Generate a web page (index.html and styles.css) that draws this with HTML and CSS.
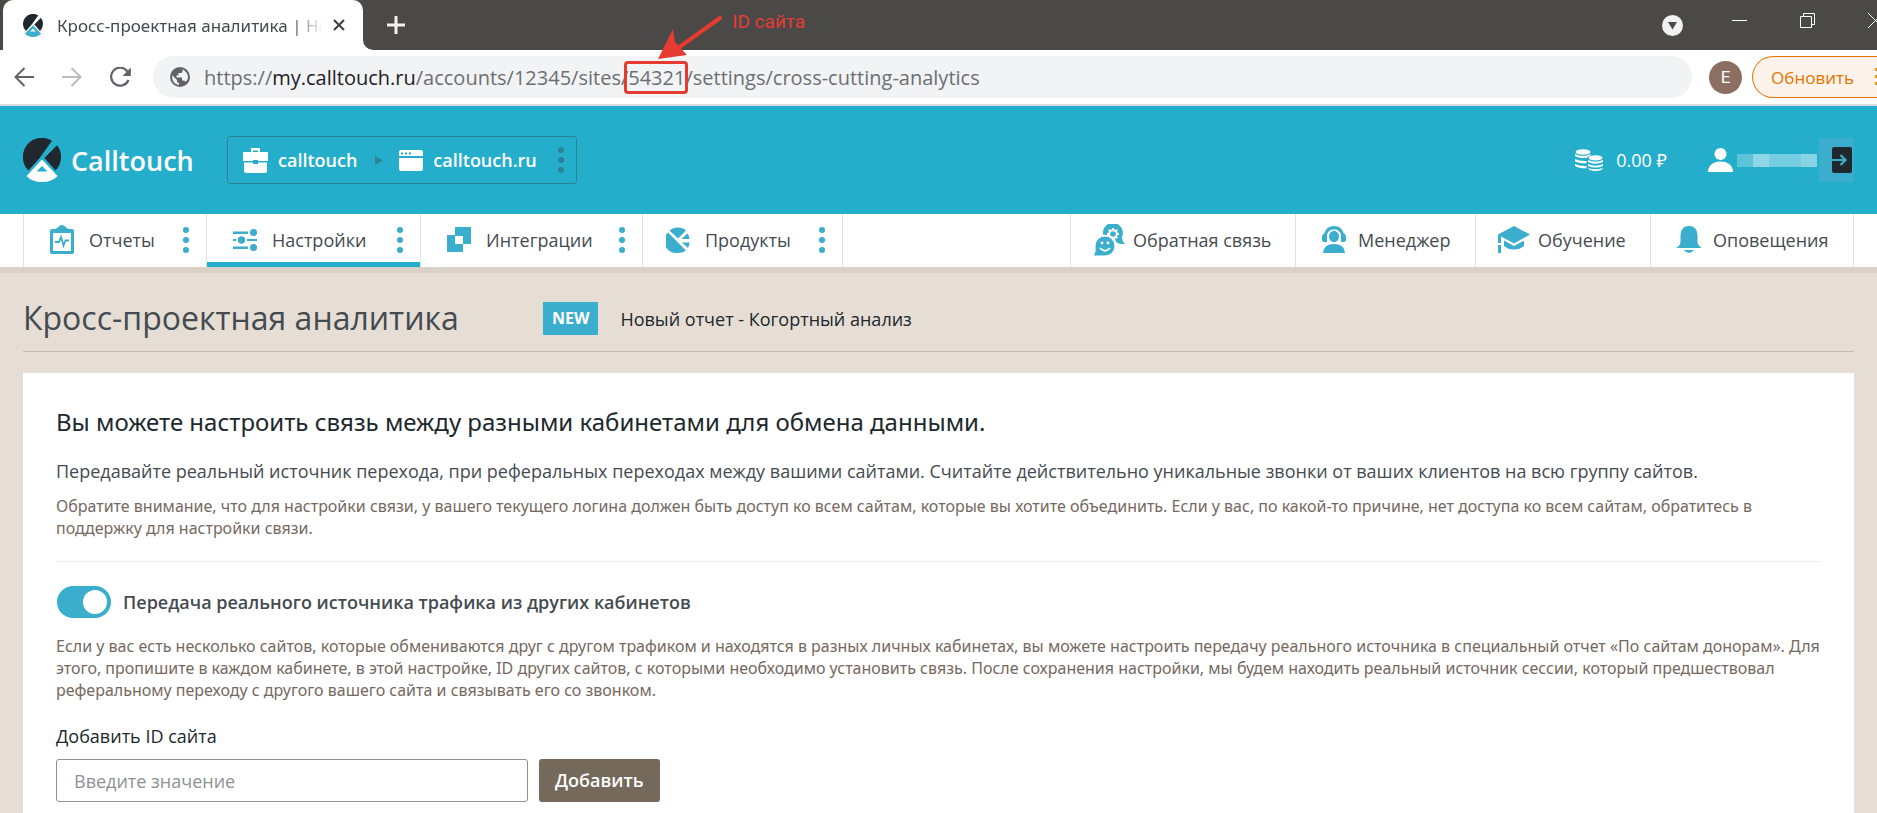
FILE: index.html
```html
<!DOCTYPE html>
<html lang="ru">
<head>
<meta charset="utf-8">
<title>Кросс-проектная аналитика | Настройки</title>
<link rel="stylesheet" href="styles.css">
</head>
<body>
<svg class="defs" aria-hidden="true">
  <defs>
    <symbol id="logo" viewBox="0 0 38 44">
      <path d="M5.500 32.400A19 19 0 0 1 29 2.800L17 19.500Z" fill="#20282d"/>
      <path d="M34 7.300A19 19 0 0 1 32.500 32.400L21.500 20Z" fill="#20282d"/>
      <path fill="currentColor" fill-rule="evenodd" d="M19 21.500L34.500 38Q29 44 19 44T3.500 38ZM19 28L13.500 33.500H24.500Z"/>
    </symbol>
    <symbol id="dots" viewBox="0 0 6 26"><circle cx="3" cy="3" r="3"/><circle cx="3" cy="13" r="3"/><circle cx="3" cy="23" r="3"/></symbol>
  </defs>
</svg>

<div class="browser">
  <div class="tabstrip">
    <div class="tab">
      <svg class="favicon" width="20" height="23"><use href="#logo"/></svg>
      <span class="tab-title">Кросс-проектная аналитика | На</span>
      <button class="plain" aria-label="Закрыть вкладку"><svg width="12" height="12" viewBox="0 0 12 12" fill="none" stroke="#3c4043" stroke-width="2"><path d="M1 1L11 11M11 1L1 11"/></svg></button>
    </div>
    <button class="plain new-tab" aria-label="Новая вкладка"><svg width="18" height="18" viewBox="0 0 18 18" fill="none" stroke="#f1f1f1" stroke-width="3"><path d="M9 0V18M0 9H18"/></svg></button>
    <div class="window-buttons">
      <button class="plain" aria-label="Поиск вкладок"><svg width="21" height="21" viewBox="0 0 21 21"><circle cx="10.500" cy="10.500" r="10.500" fill="#f1f1f1"/><path d="M6 7H15L10.500 14.500Z" fill="#4a4947"/></svg></button>
      <button class="plain lift" aria-label="Свернуть"><svg width="15" height="15" viewBox="0 0 15 15"><path d="M0 7.500H15" stroke="#fff"/></svg></button>
      <button class="plain lift" aria-label="Развернуть"><svg width="15" height="15" viewBox="0 0 15 15" fill="none" stroke="#fff"><path d="M.5 3.500H11.500V14.500H.5ZM3.500 3V.5H14.500V11.500H12"/></svg></button>
      <button class="plain lift" aria-label="Закрыть"><svg width="15" height="15" viewBox="0 0 15 15" stroke="#fff"><path d="M0 0L15 15M15 0L0 15"/></svg></button>
    </div>
  </div>

  <div class="toolbar">
    <div class="history">
      <button class="plain" aria-label="Назад"><svg width="20" height="20" viewBox="0 0 20 20" fill="none" stroke="#5f6368" stroke-width="2"><path d="M20 10H2M10.500 1L1.500 10L10.500 19"/></svg></button>
      <button class="plain" aria-label="Вперёд"><svg width="20" height="20" viewBox="0 0 20 20" fill="none" stroke="#bdbdbf" stroke-width="2"><path d="M0 10H18M9.500 1L18.500 10L9.500 19"/></svg></button>
      <button class="plain" aria-label="Обновить страницу"><svg width="21" height="21" viewBox="0 0 21 21"><path d="M17.500 4.500A9 9 0 1 0 18.500 13" fill="none" stroke="#5f6368" stroke-width="2.200"/><path d="M20.800 .5V9H12.500Z" fill="#5f6368"/></svg></button>
    </div>
    <div class="address">
      <svg width="20" height="20" viewBox="0 0 20 20"><circle cx="10" cy="10" r="10" fill="#5f6368"/><path fill="#f1f3f4" d="M12.500 2.400V4.500C12.500 5.500 11.500 6 10.500 6H8.500V8L6.500 8.500V10.500H12V13.500H13.500C14.500 13.500 15.300 14.200 15.600 15C17 13.500 18 12 18 10C18 6.500 15.500 3.500 12.500 2.400ZM2.200 8.200L7 13V14C7 15 8 15.800 9 16V18C4.500 17.300 1.500 13 2.200 8.200Z"/></svg>
      <div class="url">https://<span class="host">my.calltouch.ru</span>/accounts/12345/sites/<span class="site-id">54321<span class="marker"></span><svg class="arrow" width="66" height="46" viewBox="0 0 66 46"><path d="M62 3L20 33" stroke="#e63b30" stroke-width="4" stroke-linecap="round"/><path d="M0 44L15 14L17 27L29 40Z" fill="#e63b30"/></svg><span class="note">ID сайта</span></span>/settings/cross-cutting-analytics</div>
    </div>
    <span class="avatar">E</span>
    <button class="update"><span>Обновить</span><svg width="4" height="18" viewBox="0 0 4 18" fill="#f29900"><path d="M0 0H4V3H0ZM0 7H4V10H0ZM0 14H4V17H0Z"/></svg></button>
  </div>
</div>

<header class="header">
  <a class="brand" href="#"><svg width="38" height="44"><use href="#logo"/></svg><span>Calltouch</span></a>
  <div class="crumbs">
    <svg width="25" height="25" viewBox="0 0 25 25"><path fill="#fff" fill-rule="evenodd" d="M8 0H17V4H24Q25 4 25 5V13H15V12H10V13H0V5Q0 4 1 4H8ZM10 2.500V4H15V2.500ZM1 14.500H10V16H15V14.500H24V23Q24 25 22 25H3Q1 25 1 23Z"/></svg>
    <a href="#">calltouch</a>
    <svg class="crumb-arrow" width="8" height="9" viewBox="0 0 8 9"><path d="M0 0L8 4.500L0 9Z" fill="#2d8394"/></svg>
    <svg width="24" height="21" viewBox="0 0 24 21"><path fill="#fff" d="M2 0H22Q24 0 24 2V6H0V2Q0 0 2 0ZM0 8H24V19Q24 21 22 21H2Q0 21 0 19Z"/><path fill="#25aecb" d="M2 2.500H4V4.500H2ZM6 2.500H8V4.500H6ZM10 2.500H12V4.500H10Z"/></svg>
    <a href="#">calltouch.ru</a>
    <button class="plain crumb-menu" aria-label="Меню сайта"><svg width="6" height="26"><use href="#dots"/></svg></button>
  </div>
  <div class="account">
    <svg width="28" height="22" viewBox="0 0 28 22"><g fill="#fff"><ellipse cx="8" cy="3" rx="7.500" ry="2.800"/><path d="M0 5Q8 9 15.500 5V6.500Q12 7.500 12 9Q4 9.500 0 7ZM0 10Q5 12.500 11.500 12V14.300Q4 14.500 0 12.500ZM0 15Q5 17.300 11.500 16.800V19.300Q4 19.500 0 17Z"/><ellipse cx="20.500" cy="8.800" rx="7" ry="2.600"/><path d="M13 11Q20.500 14.500 28 11V13Q20.500 16.500 13 13ZM13 15Q20.500 18.500 28 15V17Q20.500 20 13 17ZM13 19Q20.500 21.500 28 19Q27 22 20.500 22T13 19Z"/></g></svg>
    <span class="balance">0.00 ₽</span>
    <svg width="25" height="24" viewBox="0 0 25 24" fill="#fff"><circle cx="12.500" cy="6" r="6"/><path d="M0 24V22Q2 13.500 12.500 13.500T25 22V24Z"/></svg>
    <span class="masked"><i></i><i></i><i></i><i></i><i></i></span>
    <button class="plain exit" aria-label="Выйти"><svg width="20" height="26" viewBox="0 0 20 26"><rect width="20" height="26" rx="2" fill="#20282d"/><path d="M0 13H13M8.500 8L13.500 13L8.500 18" fill="none" stroke="#3caecd" stroke-width="2.200"/></svg></button>
  </div>
</header>

<nav class="nav">
  <div class="item w-reports">
    <svg width="24" height="29" viewBox="0 0 24 29"><path fill="#3caecd" fill-rule="evenodd" d="M2 4H6V8H18V4H22Q24 4 24 6V27Q24 29 22 29H2Q0 29 0 27V6Q0 4 2 4ZM3 8V26H21V8Z"/><path fill="#3caecd" d="M6 8V4Q6 2.500 8 2.500Q9 0 12 0T16 2.500Q18 2.500 18 4V8Z"/><path fill="none" stroke="#3caecd" stroke-width="1.800" d="M5 17H9L11 12L13.500 20.500L15.500 15.500H19"/></svg>
    <a href="#">Отчеты</a>
    <button class="plain more" aria-label="Меню отчетов"><svg width="6" height="26"><use href="#dots"/></svg></button>
  </div>
  <div class="item active w-settings">
    <svg width="24" height="22" viewBox="0 0 24 22"><g fill="#3caecd"><path d="M0 2.500H15V5H0ZM0 10H3V12H0ZM14 10H24V12H14ZM0 17.500H15V20H0Z"/><circle cx="20.500" cy="3.500" r="3.500"/><circle cx="8.500" cy="11" r="3.700"/><circle cx="20.500" cy="18.500" r="3.500"/></g></svg>
    <a href="#" aria-current="page">Настройки</a>
    <button class="plain more" aria-label="Меню настроек"><svg width="6" height="26"><use href="#dots"/></svg></button>
  </div>
  <div class="item w-integrations">
    <svg width="24" height="25" viewBox="0 0 24 25"><path fill="#3caecd" fill-rule="evenodd" d="M8 0H24V17H16V25H0V8H8ZM8 9V17H16V9Z"/></svg>
    <a href="#">Интеграции</a>
    <button class="plain more" aria-label="Меню интеграций"><svg width="6" height="26"><use href="#dots"/></svg></button>
  </div>
  <div class="item w-products">
    <svg width="24" height="26" viewBox="0 0 24 26"><g fill="#3caecd"><path d="M3.500 3.500Q7 .5 12 .5T20 3.500L12 11.500Z"/><path d="M2 5.500L20 23.500Q17 26 12 26A12 12 0 0 1 2 5.500Z"/><path d="M16 11.500L21.500 6.500Q23.500 9 23.500 12H16ZM16 15.500H23.500Q23.500 18.500 22 21Z"/></g></svg>
    <a href="#">Продукты</a>
    <button class="plain more" aria-label="Меню продуктов"><svg width="6" height="26"><use href="#dots"/></svg></button>
  </div>
  <div class="links">
    <a class="link w-feedback" href="#"><svg width="32" height="32" viewBox="0 0 32 32"><path fill="#3caecd" d="M10 10.500A10 10 0 1 1 29 13Q28.500 17 32 20Q27 20.500 23.500 18.500Q22 11 10 10.500Z"/><circle cx="20" cy="10" r="3.800" fill="none" stroke="#fff" stroke-width="2"/><path stroke="#fff" stroke-width="2" d="M20 4V6M20 14V16M14 10H16M24 10H26M15.800 5.800L17 7M24.200 5.800L23 7M24.200 14.200L23 13"/><path fill="#3caecd" stroke="#fff" stroke-width="1" d="M2 22A10 10 0 1 1 12 32H0Q3 29 2 22Z"/><circle cx="9" cy="19" r="1.400" fill="#fff"/><circle cx="15" cy="19" r="1.400" fill="#fff"/><path d="M7 24Q12 29.500 17 24" fill="none" stroke="#fff" stroke-width="1.800"/></svg>Обратная связь</a>
    <a class="link w-manager" href="#"><svg width="32" height="27" viewBox="0 0 32 27"><g fill="#3caecd"><ellipse cx="16" cy="10.500" rx="5" ry="5.700"/><path d="M6.500 7Q8.500 0 16 0T25.500 7Q28 8 28 11V14Q28 16 25.500 16H23V9Q22 3.500 16 3.500T9 9V16H6.500Q4 16 4 14V11Q4 8 6.500 7Z"/><path d="M5 27Q5.500 18 16 18T27 27Z"/></g></svg>Менеджер</a>
    <a class="link w-training" href="#"><svg width="32" height="27" viewBox="0 0 32 27"><g fill="#3caecd"><path d="M16 0L32 8.500L16 17.500L3 10.500V17H0V8.500ZM0 19H3V27H0Z"/><path d="M6 14.500L16 20L26 14.500V20Q22 23.500 16 23.500T6 20Z"/></g></svg>Обучение</a>
    <a class="link w-alerts" href="#"><svg width="32" height="27" viewBox="0 0 32 27"><g fill="#3caecd"><path d="M3 22Q7 20 7.500 16V9Q8 0 16 0T24.500 9V16Q25 20 29 22Z"/><path d="M11 24H21Q19 27 16 27T11 24Z"/></g></svg>Оповещения</a>
  </div>
</nav>

<main class="page">
  <div class="page-head">
    <h1>Кросс-проектная аналитика</h1>
    <span class="badge">NEW</span>
    <a class="promo" href="#">Новый отчет - Когортный анализ</a>
  </div>
  <section class="card">
    <h2>Вы можете настроить связь между разными кабинетами для обмена данными.</h2>
    <p class="lead">Передавайте реальный источник перехода, при реферальных переходах между вашими сайтами. Считайте действительно уникальные звонки от ваших клиентов на всю группу сайтов.</p>
    <p class="hint">Обратите внимание, что для настройки связи, у вашего текущего логина должен быть доступ ко всем сайтам, которые вы хотите объединить. Если у вас, по какой-то причине, нет доступа ко всем сайтам, обратитесь в поддержку для настройки связи.</p>
    <hr>
    <div class="switch-row">
      <input class="switch" type="checkbox" id="transfer" checked>
      <label for="transfer">Передача реального источника трафика из других кабинетов</label>
    </div>
    <p class="hint">Если у вас есть несколько сайтов, которые обмениваются друг с другом трафиком и находятся в разных личных кабинетах, вы можете настроить передачу реального источника в специальный отчет «По сайтам донорам». Для этого, пропишите в каждом кабинете, в этой настройке, ID других сайтов, с которыми необходимо установить связь. После сохранения настройки, мы будем находить реальный источник сессии, который предшествовал реферальному переходу с другого вашего сайта и связывать его со звонком.</p>
    <form class="add">
      <label for="site">Добавить ID сайта</label>
      <div class="add-row">
        <input id="site" type="text" placeholder="Введите значение">
        <button type="button">Добавить</button>
      </div>
    </form>
  </section>
</main>
</body>
</html>
```
FILE: styles.css
```css
* { box-sizing: border-box; }
body {
  margin: 0;
  height: 100vh;
  overflow: hidden;
  display: flex;
  flex-direction: column;
  font-family: "Open Sans", "Noto Sans", sans-serif;
  font-size: 18px;
  font-weight: 500;
  color: #444b50;
  background: #e6ddd4;
}
a { color: inherit; text-decoration: none; }
svg { flex: none; display: block; }
input, button { font: inherit; }
.defs { position: absolute; width: 0; height: 0; }
.plain { border: 0; padding: 0; background: none; display: flex; flex: none; }

/* browser frame */
.browser { flex: none; border-bottom: 2px solid #dadce0; background: #fff; font-weight: 400; }
.tabstrip { display: flex; align-items: center; height: 50px; padding-left: 3px; background: #4a4947; overflow: hidden; }
.tab {
  display: flex;
  align-items: center;
  flex: none;
  width: 360px;
  height: 50px;
  padding: 0 18px 0 20px;
  border-radius: 10px 10px 0 0;
  background: #fff;
  box-shadow: 10px 20px 0 #fff;
  position: relative;
}
.tab::after {
  content: "";
  position: absolute;
  left: 100%;
  bottom: 0;
  width: 10px;
  height: 50px;
  border-bottom-left-radius: 10px;
  background: #4a4947;
}
.favicon { color: #3caecd; }
.tab-title {
  flex: 1;
  margin: 0 10px 0 14px;
  font-family: "Noto Sans", sans-serif;
  font-size: 17px;
  white-space: nowrap;
  color: #45494d;
  width: 0;
  mask-image: linear-gradient(90deg, #000 88%, transparent);
}
.new-tab { margin-left: 24px; }
.window-buttons { display: flex; align-items: center; margin-left: auto; margin-right: -6px; }
.window-buttons button + button { margin-left: 53px; }
.window-buttons button:nth-child(2) { margin-left: 49px; }
.lift { padding-bottom: 9px; }
.toolbar { display: flex; align-items: center; height: 54px; }
.history { display: flex; gap: 28px; padding-left: 14px; width: 153px; }
.address {
  flex: 1;
  display: flex;
  align-items: center;
  gap: 14px;
  height: 42px;
  padding-left: 17px;
  border-radius: 21px;
  background: #f1f3f4;
}
.url { font-size: 20px; white-space: nowrap; color: #6b6f73; }
.host { color: #202124; }
.site-id { position: relative; }
.marker { position: absolute; left: -4px; right: -3px; top: -3px; bottom: -3px; border: 3px solid #e63b30; border-radius: 4px; }
.arrow { position: absolute; left: 30px; bottom: 30px; }
.note { position: absolute; left: 104px; bottom: 57px; font: 19px/24px Roboto, "Liberation Sans", sans-serif; color: #e63b30; }
.avatar {
  width: 33px;
  height: 33px;
  margin: 0 10px 0 17px;
  border-radius: 50%;
  background: #8d6e63;
  color: #fff;
  font: 17px/33px Roboto, sans-serif;
  text-align: center;
}
.update {
  display: flex;
  align-items: center;
  gap: 21px;
  height: 42px;
  padding: 0 0 0 18px;
  border: 1px solid #e37400;
  border-right: 0;
  border-radius: 21px 0 0 21px;
  background: #fdf3ea;
  color: #e37400;
  font-size: 17px;
  margin-right: -2px;
}

/* product header */
.header { flex: none; display: flex; align-items: center; height: 108px; padding: 0 23px; background: #25aecb; color: #fff; }
.brand { display: flex; align-items: center; gap: 10px; width: 204px; font-size: 27px; font-weight: 600; }
.crumbs {
  display: flex;
  align-items: center;
  gap: 10px;
  width: 350px;
  height: 48px;
  padding: 0 12px 0 15px;
  border: 1px solid #2d8394;
  border-radius: 3px;
  font-weight: 600;
}
.crumb-arrow { margin: 0 6px 0 8px; }
.crumb-menu { margin-left: auto; fill: #2d8394; }
.account { display: flex; align-items: center; margin-left: auto; font-weight: 400; }
.balance { margin: 0 41px 0 13px; }
.masked { display: flex; margin-left: 4px; height: 13px; }
.masked i { width: 16px; background: #74cde0; }
.masked i:first-child { background: #5cc3d9; }
.masked i:nth-child(2) { background: #8fd7e6; }
.masked i:last-child { background: #86d4e4; }
.exit { width: 35px; height: 44px; margin-left: 2px; padding-right: 2px; align-items: center; justify-content: flex-end; border-radius: 2px; background: #3caecd; }

/* main navigation */
.nav { flex: none; display: flex; height: 53px; padding: 0 23px; background: #fff; box-shadow: 0 6px 0 #d9d0c6; position: relative; }
.item, .link { display: flex; align-items: center; padding-bottom: 2px; border-left: 1px solid #e2e2e2; white-space: nowrap; }
.item { gap: 15px; padding-left: 26px; padding-right: 17px; }
.item a { flex: 1; }
.more { fill: #3caecd; }
.active { box-shadow: inset 0 -5px 0 #25aecb; }
.w-reports { width: 183px; }
.w-settings { width: 214px; }
.w-integrations { width: 222px; }
.w-products { width: 201px; padding-left: 23px; border-right: 1px solid #e2e2e2; }
.links { display: flex; margin-left: auto; border-right: 1px solid #e2e2e2; }
.link { gap: 8px; padding-left: 22px; }
.w-feedback { width: 225px; }
.w-manager { width: 180px; }
.w-training { width: 175px; }
.w-alerts { width: 203px; }

/* page */
.page { flex: 1; display: flex; flex-direction: column; padding: 0 23px; }
.page-head { flex: none; display: flex; align-items: center; height: 85px; padding-top: 18px; margin-bottom: 21px; border-bottom: 1px solid #c8bca8; }
h1 { width: 520px; margin: 0; font-size: 32px; line-height: 40px; font-weight: 400; }
.badge { padding: 0 9px; background: #3caecd; color: #fff; font-size: 16px; line-height: 33px; font-weight: 700; }
.promo { margin-left: 22px; padding-top: 2px; color: #20282d; }
.card { flex: 1 0 auto; padding: 33px; background: #fff; }
h2 { margin: 0 0 19px; font-family: "Noto Sans", sans-serif; font-size: 24px; line-height: 32px; font-weight: 400; color: #20282d; }
.lead { margin: 0 0 10px; line-height: 28px; }
.hint { margin: 0; font-family: "Noto Sans", sans-serif; font-size: 16px; line-height: 22px; font-weight: 400; color: #75695f; }
hr { margin: 22px 0 24px; border: 0; border-top: 1px solid #ececec; }
.switch-row { display: flex; align-items: center; gap: 12px; margin-bottom: 17px; font-weight: 600; }
.switch { appearance: none; width: 54px; height: 32px; margin: 0 0 0 1px; padding: 4px; border-radius: 16px; background: #3caecd; display: flex; justify-content: flex-end; }
.switch::before { content: ""; width: 24px; height: 24px; border-radius: 50%; background: #fff; }
.add { margin-top: 21px; }
.add label { display: block; margin-bottom: 9px; line-height: 28px; color: #20282d; }
.add-row { display: flex; gap: 11px; }
.add input { width: 472px; height: 43px; padding: 0 17px; border: 1px solid #8e9295; border-radius: 3px; }
.add input::placeholder { color: #8e9295; }
.add button { height: 43px; padding: 0 16px 2px; border: 0; border-radius: 3px; background: #75695c; color: #fff; font-weight: 600; }
```
